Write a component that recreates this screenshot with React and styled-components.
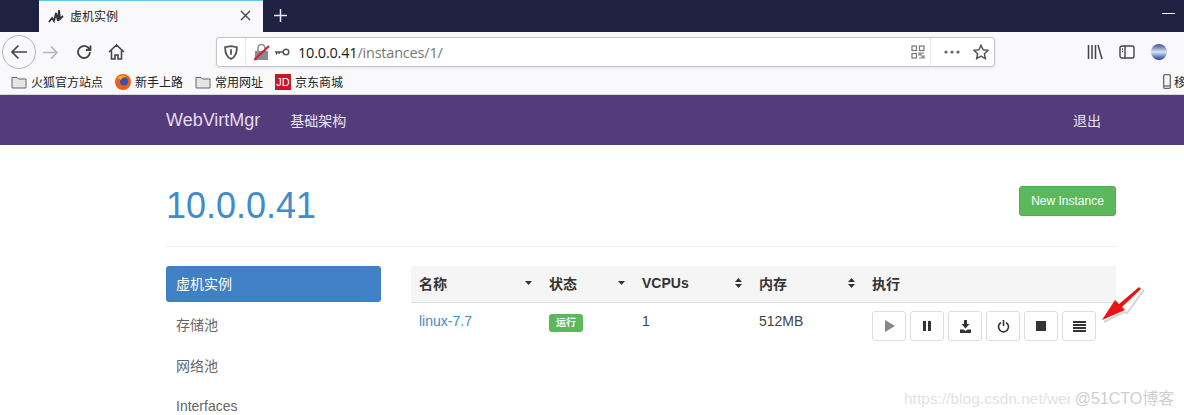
import React from "react";
import styled, { createGlobalStyle } from "styled-components";

const Global = createGlobalStyle`
  html, body { margin: 0; padding: 0; background: #fff; }
  body { width: 1184px; height: 415px; overflow: hidden; position: relative;
    font-family: "Liberation Sans", "Noto Sans CJK SC", sans-serif; color: #333; }
  * { box-sizing: border-box; }
`;

const TabStrip = styled.div`
  height: 32px; background: #1f2142; display: flex; align-items: stretch; padding-left: 39px;
`;
const Tab = styled.div`
  width: 224px; background: #f9f9fb; border-top: 1px solid #5fc8ef; display: flex; align-items: center;
  padding: 0 9px 2px 9px; font-size: 12px; color: #222;
`;
const TabTitle = styled.span` margin-left: 6px; flex: 1; `;
const TabClose = styled.span` width: 18px; display: flex; justify-content: center; `;
const NewTab = styled.div` width: 34px; padding-bottom: 2px; display: flex; align-items: center; justify-content: center; `;
const Spacer = styled.div` flex: 1; `;
const Minimize = styled.div`
  width: 13px; height: 1px; background: #fff; margin: 13px 9px 0 0;
`;

const Toolbar = styled.div`
  height: 40px; background: #f9f9fb; display: flex; align-items: center; padding-left: 2px;
`;
const BackCircle = styled.div`
  width: 34px; height: 34px; border-radius: 50%; border: 1px solid #b5b5b9; display: flex;
  align-items: center; justify-content: center; background: #f9f9fb; flex: none;
`;
const NavIcon = styled.div`
  width: ${p => p.$w || 32}px; display: flex; align-items: center; justify-content: center; flex: none;
`;
const UrlBar = styled.div`
  margin-left: 88px; width: 779px; height: 30px; background: #fff; border: 1px solid #c4c4c8; border-radius: 3px;
  display: flex; align-items: center; box-shadow: 0 1px 3px rgba(0,0,0,.08); flex: none;
`;
const UrlShield = styled.div`
  width: 29px; height: 100%; display: flex; align-items: center; justify-content: center; border-right: 1px solid #ececee;
`;
const UrlLock = styled.div` display: flex; align-items: center; gap: 4px; margin-left: 8px; `;
const UrlText = styled.div`
  margin-left: 8px; font-size: 14.5px; color: #1a1a1a; flex: 1; font-family: "Open Sans", "Liberation Sans", sans-serif;
  letter-spacing: -0.2px;
`;
const UrlMuted = styled.span` color: #777; `;
const UrlAction = styled.div`
  display: flex; align-items: center; justify-content: center; width: ${p => p.$w}px; height: 100%;
  padding-left: ${p => p.$pl || 0}px;
  border-right: ${p => p.$line ? "1px solid #ececee" : "none"};
`;
const RightTools = styled.div` display: flex; align-items: center; margin-left: 92px; gap: 16px; `;

const Bookmarks = styled.div`
  height: 23px; background: #f9f9fb; display: flex; align-items: center; padding: 0 0 3px 11px; font-size: 12px; color: #222;
  border-bottom: 1px solid #d8d8da; position: relative;
`;
const Bookmark = styled.div`
  display: flex; align-items: center; gap: 4px; margin-right: ${p => p.$mr}px; white-space: nowrap;
`;
const Clipped = styled.div`
  position: absolute; left: 1163px; top: 1px; display: flex; align-items: center; gap: 3px; white-space: nowrap;
`;
const JD = styled.div`
  width: 16px; height: 16px; background: #c91623; color: #fff; font-size: 11px; line-height: 16px; text-align: center;
  font-weight: 400;
`;

const Navbar = styled.div`
  height: 50px; background: #533c79; display: flex; align-items: center; padding: 0 83px 0 166px; color: #e4daf2;
`;
const Brand = styled.div` font-size: 18px; margin-right: 30px; `;
const NavLink = styled.div` font-size: 14px; color: #e8e1f2; `;

const Container = styled.div` padding: 0 68px 0 166px; `;
const Header = styled.div`
  height: 102px; border-bottom: 1px solid #eee; display: flex; justify-content: space-between; align-items: flex-start;
  padding-top: 41px;
`;
const Title = styled.h1`
  margin: 0; font-size: 36px; font-weight: 400; line-height: 40px; color: #428bca;
`;
const NewButton = styled.div`
  margin-top: 0; width: 97px; height: 30px; background: #5cb85c; border: 1px solid #4cae4c; border-radius: 3px;
  color: #fff; font-size: 12px; display: flex; align-items: center; justify-content: center;
`;
const Body = styled.div` display: flex; gap: 30px; padding-top: 19px; `;
const Side = styled.div` width: 215px; display: flex; flex-direction: column; gap: 5px; flex: none; `;
const SideItem = styled.div`
  height: 36px; padding: 0 10px 2px; display: flex; align-items: center; font-size: 14px; border-radius: 3px;
  background: ${p => p.$active ? "#4080c4" : "transparent"};
  color: ${p => p.$active ? "#fff" : "#666"};
`;
const Main = styled.div` flex: 1; `;
const Row = styled.div`
  display: grid; grid-template-columns: 130px 93px 117px 113px 1fr; 
`;
const HeadRow = styled(Row)`
  height: 37px; background: #f5f5f5; border-bottom: 1px solid #ddd; font-size: 14px; font-weight: 700; color: #333;
`;
const HeadCell = styled.div`
  display: flex; align-items: center; justify-content: space-between; padding: 0 8px 2px;
`;
const DataCell = styled.div`
  padding: 9px 8px 0; font-size: 14px; color: #444; line-height: 18px;
`;
const Link = styled.span` color: #428bca; `;
const Badge = styled.span`
  display: inline-flex; align-items: center; justify-content: center; width: 34px; height: 18px; margin-top: 2px;
  background: #5cb85c; color: #fff; font-size: 10px; font-weight: 700; border-radius: 3px;
`;
const Actions = styled.div` display: flex; gap: 4px; padding: 8px 0 0 8px; `;
const ActionBtn = styled.div`
  width: 34px; height: 30px; background: #fff; border: 1px solid #ddd; border-radius: 3px;
  display: flex; align-items: center; justify-content: center;
`;
const ArrowLayer = styled.svg` position: absolute; left: 1100px; top: 284px; `;
const Watermark = styled.div`
  position: absolute; left: 904px; top: 385px; font-size: 15.500px; white-space: nowrap; color: #e2e2e2;
`;
const WatermarkStrong = styled.span` color: #cfcfcf; font-size: 16px; `;

const Folder = () => (
  <svg width="16" height="14" viewBox="0 0 16 14"><path d="M1 2.500h5l1.500 1.500H15v9H1z" fill="#e6e6e6" stroke="#666" /></svg>
);
const Sort = ({ type }) => (
  <svg width="9" height="12" viewBox="0 0 9 12" fill="#333">
    {type === "both" && <path d="M4.500 1L8 5H1z" />}
    <path d={type === "both" ? "M4.500 11L1 7h7z" : "M1 4h7L4.500 8z"} />
  </svg>
);

export default function App() {
  return (
    <>
      <Global />
      <TabStrip>
        <Tab>
          <svg width="16" height="16" viewBox="0 0 16 16" fill="none" stroke="#333" strokeWidth="1.800">
            <path d="M1 14l3-4 2 3 2-8 2 8 1-11 1 9 3-3" />
          </svg>
          <TabTitle>虚机实例</TabTitle>
          <TabClose>
            <svg width="11" height="11" viewBox="0 0 11 11" stroke="#444" strokeWidth="1.400"><path d="M1 1l9 9M10 1l-9 9" /></svg>
          </TabClose>
        </Tab>
        <NewTab>
          <svg width="15" height="15" viewBox="0 0 15 15" stroke="#e8e8ef" strokeWidth="1.500"><path d="M7.500 1v13M1 7.500h13" /></svg>
        </NewTab>
        <Spacer />
        <Minimize />
      </TabStrip>
      <Toolbar>
        <BackCircle>
          <svg width="18" height="16" viewBox="0 0 18 16" fill="none" stroke="#444" strokeWidth="1.700"><path d="M17 8H2M8.500 1.500L2 8l6.500 6.500" /></svg>
        </BackCircle>
        <NavIcon $w={28}>
          <svg width="17" height="15" viewBox="0 0 18 16" fill="none" stroke="#b8b8ba" strokeWidth="1.700"><path d="M1 8h15M9.500 1.500L16 8l-6.500 6.500" /></svg>
        </NavIcon>
        <NavIcon $w={40}>
          <svg width="16" height="16" viewBox="0 0 16 16" fill="none" stroke="#444" strokeWidth="1.800"><path d="M14 8a6 6 0 1 1-2-4.500L14.500 6M14.500 1.500V6H10" /></svg>
        </NavIcon>
        <NavIcon $w={24}>
          <svg width="17" height="16" viewBox="0 0 17 16" fill="none" stroke="#444" strokeWidth="1.600"><path d="M1 8l7.500-7L16 8M3.500 6.500V15h3.500v-4h3v4h3.500V6.500" /></svg>
        </NavIcon>
        <UrlBar>
          <UrlShield>
            <svg width="14" height="15" viewBox="0 0 13 14" fill="none" stroke="#555" strokeWidth="1.700"><path d="M1 2l5.500-1L12 2c0 5-1 9-5.500 11C2 11 1 7 1 2z" /><path d="M6.500 4v5" /></svg>
          </UrlShield>
          <UrlLock>
            <svg width="16" height="17" viewBox="0 0 16 17">
              <rect x="1" y="7" width="13" height="9" fill="#8a8a8a" />
              <path d="M4 7V4a3.500 3.500 0 0 1 7 0v3" fill="none" stroke="#8a8a8a" strokeWidth="1.500" />
              <path d="M0 16L15 2" stroke="#d0213f" strokeWidth="2.200" />
            </svg>
            <svg width="16" height="8" viewBox="0 0 16 8" fill="none" stroke="#555" strokeWidth="1.500"><circle cx="12" cy="4" r="2.800" /><path d="M9 4H1M2.500 4v2.500M5 4v2" /></svg>
          </UrlLock>
          <UrlText>10.0.0.41<UrlMuted>/instances/1/</UrlMuted></UrlText>
          <UrlAction $w={26} $line>
            <svg width="14" height="14" viewBox="0 0 14 14" fill="none" stroke="#777" strokeWidth="1.200">
              <rect x="1" y="1" width="4.500" height="4.500" /><rect x="8.500" y="1" width="4.500" height="4.500" /><rect x="1" y="8.500" width="4.500" height="4.500" /><path d="M8 8h2v2H8zM11 11h2v2h-2zM11 8h2M8 13h2" />
            </svg>
          </UrlAction>
          <UrlAction $w={37} $pl={5}>
            <svg width="16" height="4" viewBox="0 0 16 4" fill="#666"><circle cx="2" cy="2" r="1.600" /><circle cx="8" cy="2" r="1.600" /><circle cx="14" cy="2" r="1.600" /></svg>
          </UrlAction>
          <UrlAction $w={26}>
            <svg width="16" height="16" viewBox="0 0 16 16" fill="none" stroke="#555" strokeWidth="1.500"><path d="M8 1.200l2.100 4.500 4.900.6-3.600 3.400.9 4.900L8 12.200l-4.300 2.400.9-4.900L1 6.300l4.900-.6z" /></svg>
          </UrlAction>
        </UrlBar>
        <RightTools>
          <NavIcon $w={16}>
            <svg width="16" height="14" viewBox="0 0 16 14" stroke="#444" strokeWidth="1.500"><path d="M1.500 0v14M5 0v14M8.500 0v14M11 0l4 14" /></svg>
          </NavIcon>
          <NavIcon $w={16}>
            <svg width="16" height="14" viewBox="0 0 16 14" fill="none" stroke="#444" strokeWidth="1.400"><rect x="1" y="1" width="14" height="12" rx="2" /><path d="M6 1v12M3 4h1M3 6.500h1" /></svg>
          </NavIcon>
          <NavIcon $w={16}>
            <svg width="16" height="16" viewBox="0 0 16 16">
              <defs><linearGradient id="globe" x1="0" y1="0" x2="0" y2="1"><stop offset="0" stopColor="#35528f" /><stop offset="0.5" stopColor="#d8e4f4" /><stop offset="1" stopColor="#1c3f95" /></linearGradient></defs>
              <circle cx="8" cy="8" r="8" fill="url(#globe)" />
            </svg>
          </NavIcon>
        </RightTools>
      </Toolbar>
      <Bookmarks>
        <Bookmark $mr={12}><Folder />火狐官方站点</Bookmark>
        <Bookmark $mr={12}>
          <svg width="16" height="16" viewBox="0 0 16 16"><circle cx="8" cy="8" r="8" fill="#e8601c" /><circle cx="9" cy="7.500" r="4" fill="#3c4fa8" /><path d="M2 4c3-3 7-3 9-1-3 0-4 1-5 3z" fill="#f6a821" /></svg>
          新手上路
        </Bookmark>
        <Bookmark $mr={12}><Folder />常用网址</Bookmark>
        <Bookmark $mr={0}><JD>JD</JD>京东商城</Bookmark>
        <Clipped>
          <svg width="8" height="15" viewBox="0 0 8 15" fill="none" stroke="#666" strokeWidth="1.300"><rect x="0.700" y="0.700" width="6.600" height="13.600" rx="1" /><path d="M1 12h6" /></svg>
          移
        </Clipped>
      </Bookmarks>
      <Navbar>
        <Brand>WebVirtMgr</Brand>
        <NavLink>基础架构</NavLink>
        <Spacer />
        <NavLink>退出</NavLink>
      </Navbar>
      <Container>
        <Header>
          <Title>10.0.0.41</Title>
          <NewButton>New Instance</NewButton>
        </Header>
        <Body>
          <Side>
            <SideItem $active>虚机实例</SideItem>
            <SideItem>存储池</SideItem>
            <SideItem>网络池</SideItem>
            <SideItem>Interfaces</SideItem>
          </Side>
          <Main>
            <HeadRow>
              <HeadCell>名称<Sort type="down" /></HeadCell>
              <HeadCell>状态<Sort type="down" /></HeadCell>
              <HeadCell>VCPUs<Sort type="both" /></HeadCell>
              <HeadCell>内存<Sort type="both" /></HeadCell>
              <HeadCell>执行</HeadCell>
            </HeadRow>
            <Row>
              <DataCell><Link>linux-7.7</Link></DataCell>
              <DataCell><Badge>运行</Badge></DataCell>
              <DataCell>1</DataCell>
              <DataCell>512MB</DataCell>
              <Actions>
                <ActionBtn><svg width="11" height="12" viewBox="0 0 11 12" fill="#888"><path d="M1 0l10 6-10 6z" /></svg></ActionBtn>
                <ActionBtn><svg width="8" height="10" viewBox="0 0 8 10" fill="#333"><path d="M0 0h3v10H0zM5 0h3v10H5z" /></svg></ActionBtn>
                <ActionBtn><svg width="13" height="13" viewBox="0 0 13 13" fill="#333"><path d="M5 0h3v4h2.500L6.500 8.500 2.500 4H5zM1 9.500h3.500l2 1.500 2-1.500H12V13H1z" /></svg></ActionBtn>
                <ActionBtn><svg width="13" height="13" viewBox="0 0 13 13" fill="none" stroke="#333" strokeWidth="1.600"><path d="M4 2.500a5 5 0 1 0 5 0M6.500 0v6" /></svg></ActionBtn>
                <ActionBtn><svg width="10" height="10" viewBox="0 0 10 10" fill="#333"><rect width="10" height="10" /></svg></ActionBtn>
                <ActionBtn><svg width="13" height="11" viewBox="0 0 13 11" fill="#333"><path d="M0 0h13v2H0zM0 3h13v2H0zM0 6h13v2H0zM0 9h13v2H0z" /></svg></ActionBtn>
              </Actions>
            </Row>
          </Main>
        </Body>
      </Container>
      <ArrowLayer width="46" height="42" viewBox="0 0 46 42">
        <path d="M4 38L24 28l3 1L44 6" stroke="#888" strokeWidth="2" fill="none" opacity=".35" />
        <path d="M2 36L15 16l4 4L39 3l2 2-19 18 3 3z" fill="#e81416" />
      </ArrowLayer>
      <Watermark>https://blog.csdn.net/wei<WatermarkStrong> @51CTO博客</WatermarkStrong></Watermark>
    </>
  );
}
